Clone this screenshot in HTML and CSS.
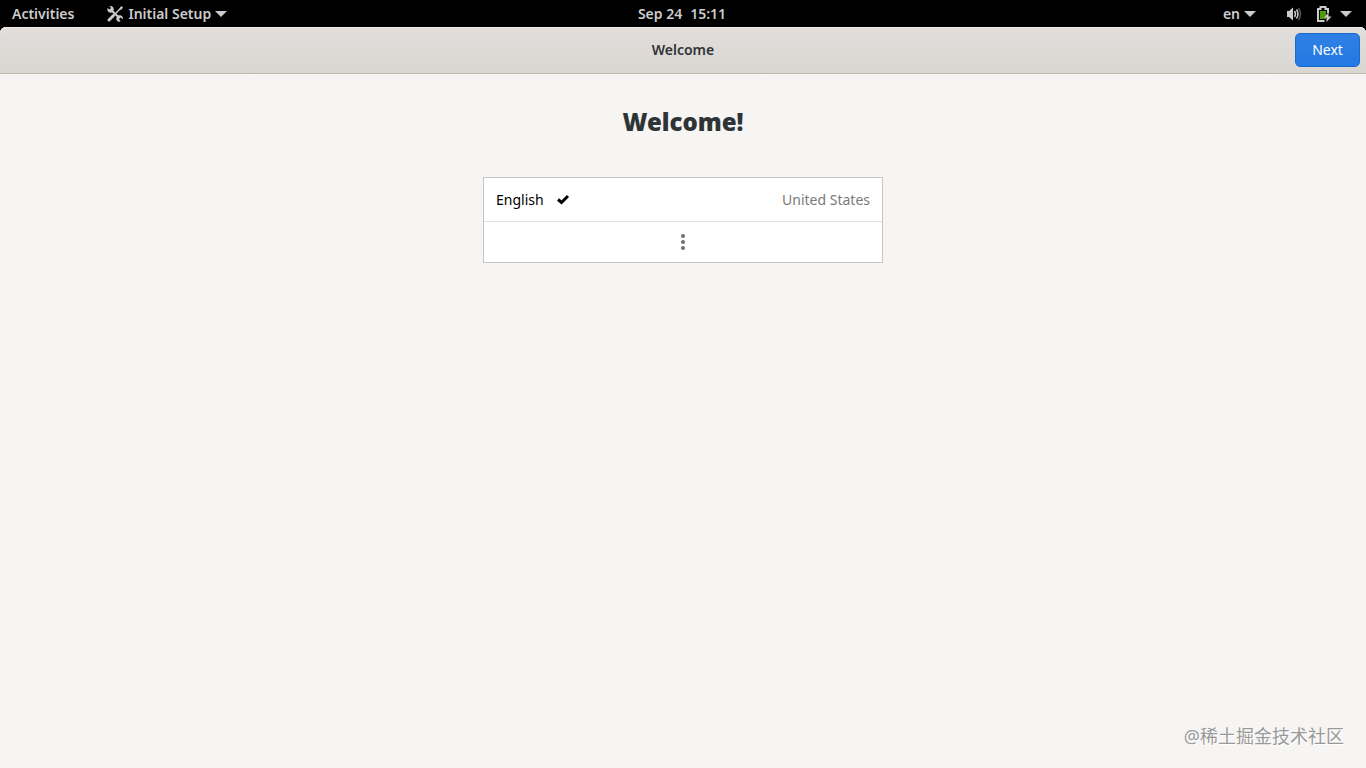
FILE: index.html
```
<!DOCTYPE html>
<html lang="en">
<head>
    <meta charset="UTF-8">
    <meta name="viewport" content="width=device-width, initial-scale=1.0">
    <title>Initial Setup</title>
    <link rel="stylesheet" href="styles.css">
</head>
<body>
    <nav class="topbar">
        <div class="topbar-left">
            <button type="button" class="panel-button">Activities</button>
            <button type="button" class="panel-button app-menu">
                <svg width="18" height="16" viewBox="-1 0 18 16" aria-hidden="true">
                    <path d="M4 4L12.500 12" stroke="#ccc" stroke-width="2.200"/>
                    <path d="M0.500 2L2.500 3.500L4 2L2.500 0C5.500 -0.500 7.500 2 6.500 4.500L4.500 6.500C2 7.500 -0.500 5 0.500 2ZM9.500 11.500L11.500 9.500C14 8.500 16.500 10.500 16 13L13.500 11.500L12 13L13.500 15.500C10.500 16.500 8.500 14 9.500 11.500Z" fill="#ccc"/>
                    <path d="M14.500 1.500L8.500 7.500" stroke="#ccc" stroke-width="1.400"/>
                    <path d="M14.500 0L16 1.500L14 4L12.500 2.500Z" fill="#ccc"/>
                    <path d="M6.500 9.500L2 14" stroke="#ccc" stroke-width="3" stroke-linecap="round"/>
                </svg>
                Initial Setup
                <span class="arrow"></span>
            </button>
        </div>
        <button type="button" class="panel-button clock"><span>Sep 24</span><span>15:11</span></button>
        <div class="topbar-right">
            <button type="button" class="panel-button language">en <span class="arrow"></span></button>
            <button type="button" class="panel-button status" aria-label="System menu">
                <svg class="volume" width="16" height="16" viewBox="0 0 16 16" aria-hidden="true">
                    <path d="M1 5H3L7 1.500V14.500L3 11H1Z" fill="#ccc"/>
                    <path d="M8.500 5Q10.500 8 8.500 11M10.500 3.500Q13.500 8 10.500 12.500" fill="none" stroke="#ccc" stroke-width="1.500"/>
                    <path d="M12.500 2Q16.500 8 12.500 14" fill="none" stroke="#555" stroke-width="1.500"/>
                </svg>
                <svg width="16" height="16" viewBox="0 0 16 16" aria-hidden="true">
                    <path d="M4 5H10V13H4Z" fill="#4e9a06"/>
                    <path d="M12 7V3H9.500V1H4.500V3H2V15H8.500" fill="none" stroke="#ccc" stroke-width="2"/>
                    <path d="M12.500 6.500L8 11.500H10.500V16L15.500 10.500H12.500Z" fill="#ccc"/>
                </svg>
                <span class="arrow"></span>
            </button>
        </div>
    </nav>
    <div class="window">
        <header class="headerbar">
            <h2>Welcome</h2>
            <button type="button" class="next">Next</button>
        </header>
        <main>
            <h1>Welcome!</h1>
            <div class="language-list">
                <button type="button" class="row">
                    <span>English</span>
                    <svg width="14" height="12" viewBox="0 0 14 12" aria-hidden="true">
                        <path d="M2 5.500L5.500 8.500L12 2" fill="none" stroke="#000" stroke-width="3"/>
                    </svg>
                    <span class="country">United States</span>
                </button>
                <button type="button" class="row more" aria-label="More languages">
                    <svg width="16" height="16" viewBox="0 0 16 16" aria-hidden="true">
                        <circle cx="8" cy="2" r="2"/>
                        <circle cx="8" cy="8" r="2"/>
                        <circle cx="8" cy="14" r="2"/>
                    </svg>
                </button>
            </div>
        </main>
        <footer>@稀土掘金技术社区</footer>
    </div>
</body>
</html>
```
FILE: styles.css
```
* {
    box-sizing: border-box;
}
body {
    margin: 0;
    min-height: 100vh;
    display: flex;
    flex-direction: column;
    background: #000;
    font-family: "Noto Sans", "Noto Sans CJK SC", sans-serif;
    font-size: 14px;
    line-height: 20px;
}
button {
    font: inherit;
    border: none;
    background: none;
    padding: 0;
}
svg {
    display: block;
    flex: none;
}
.topbar {
    display: grid;
    grid-template-columns: 1fr auto 1fr;
    align-items: center;
    height: 27px;
    padding: 0 14px 0 12px;
}
.topbar-left, .topbar-right {
    display: flex;
    gap: 32px;
}
.topbar-right {
    justify-content: flex-end;
    gap: 30px;
}
.panel-button {
    display: flex;
    align-items: center;
    gap: 4px;
    color: #ccc;
    font-weight: 600;
}
.clock {
    gap: 8px;
}
.status {
    gap: 8px;
}
.volume {
    margin-right: 6px;
}
.arrow {
    border: 6px solid transparent;
    border-top-color: #ccc;
    border-bottom: none;
}
.window {
    flex: 1;
    display: flex;
    flex-direction: column;
    background: #f6f5f4;
    border-radius: 6px 6px 0 0;
}
.headerbar {
    display: grid;
    grid-template-columns: 1fr auto 1fr;
    align-items: center;
    height: 47px;
    padding: 0 6px;
    background: linear-gradient(to top, #dad6d2, #e1dedb);
    border-bottom: 1px solid #bfb8b1;
    border-radius: 6px 6px 0 0;
    box-shadow: inset 0 1px #f0eeec;
}
.headerbar h2 {
    grid-column: 2;
    margin: 0;
    font-size: 14px;
    font-weight: 600;
    color: #2e3436;
}
.next {
    justify-self: end;
    width: 65px;
    height: 34px;
    border: 1px solid #1b6acb;
    border-radius: 5px;
    background: linear-gradient(to top, #2379e2, #2f80e4);
    color: #fff;
}
main {
    flex: 1;
    display: flex;
    flex-direction: column;
    align-items: center;
    padding: 30px 20px;
}
h1 {
    margin: 0 0 37px;
    font-size: 24px;
    font-weight: 900;
    line-height: 36px;
    color: #2e3436;
}
.language-list {
    width: 100%;
    max-width: 400px;
    background: #fff;
    border: 1px solid #c6c4c2;
}
.row {
    display: flex;
    align-items: center;
    gap: 12px;
    width: 100%;
    height: 43px;
    padding: 0 12px;
    color: #000;
}
.country {
    margin-left: auto;
    color: #7a7a7a;
}
.more {
    justify-content: center;
    height: 41px;
    border-top: 1px solid #e1e1e1;
    fill: #6e6e6e;
}
footer {
    padding: 0 22px 20px;
    text-align: right;
    font-size: 18px;
    line-height: 24px;
    color: #999;
    text-shadow: 1px 1px #fff;
}
```
